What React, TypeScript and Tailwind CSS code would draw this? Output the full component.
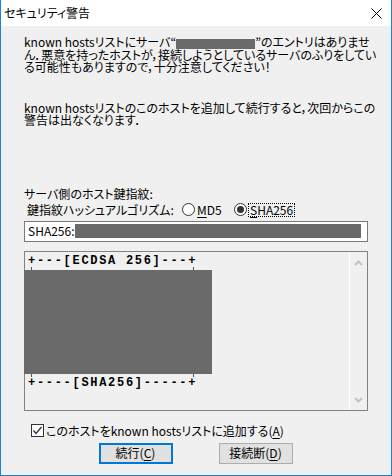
function Radio({ checked }: { checked?: boolean }) {
  return (
    <span className="flex h-[13px] w-[13px] items-center justify-center rounded-full border border-[#333333] bg-white">
      {checked && <span className="h-[7px] w-[7px] rounded-full bg-[#333333]" />}
    </span>
  );
}

function Redacted({ w, h }: { w: number; h: number }) {
  return <span className="inline-block bg-[#6a6a6a] align-middle" style={{ width: w, height: h }} />;
}

function Chevron({ down }: { down?: boolean }) {
  return (
    <svg width="9" height="6" viewBox="0 0 9 6" className={down ? "rotate-180" : ""}>
      <polyline points="1,5 4.5,1.5 8,5" fill="none" stroke="#c4c4c4" strokeWidth="2" />
    </svg>
  );
}

export default function App() {
  return (
    <div className="flex h-[476px] w-[392px] flex-col overflow-hidden border-x border-b border-[#1883d7] bg-[#f0f0f0] font-['Noto_Sans_CJK_JP',sans-serif] text-[12px] text-black [font-feature-settings:'palt']">
      {/* title bar */}
      <div className="flex h-[26px] shrink-0 items-center justify-between bg-white pl-[3px] pr-[9px]">
        <span className="leading-[14px]">セキュリティ警告</span>
        <svg width="11" height="11" viewBox="0 0 11 11">
          <path d="M0.5 0.5 L10.5 10.5 M10.5 0.5 L0.5 10.5" stroke="#000" strokeWidth="1" />
        </svg>
      </div>

      <div className="flex flex-col pl-[23px]">
        <div className="mt-[10px] leading-[12.5px] whitespace-nowrap">
          <div>
            known hostsリストにサーバ“<Redacted w={79} h={10} />”のエントリはありませ
          </div>
          <div>ん．悪意を持ったホストが，接続しようとしているサーバのふりをしてい</div>
          <div>る可能性もありますので，十分注意してください！</div>
        </div>

        <div className="mt-[28px] leading-[12.5px] whitespace-nowrap">
          <div>known hostsリストのこのホストを追加して続行すると，次回からこの</div>
          <div>警告は出なくなります．</div>
        </div>

        <div className="mt-[60px] leading-[13px]">サーバ側のホスト鍵指紋:</div>

        <div className="mt-[3px] flex h-[14px] items-center pl-[3px] leading-[14px]">
          <span className="w-[155px] whitespace-nowrap">鍵指紋ハッシュアルゴリズム:</span>
          <span className="flex w-[52px] items-center gap-[2px]">
            <Radio />
            <span>
              <span className="underline underline-offset-2">M</span>D5
            </span>
          </span>
          <span className="flex items-center gap-[1px]">
            <Radio checked />
            <span className="border border-dotted border-black px-[1px] leading-[12px]">
              <span className="underline underline-offset-2">S</span>HA256
            </span>
          </span>
        </div>

        <div className="mt-[4px] flex h-[21px] w-[344px] items-center border border-[#7a7a7a] bg-white pl-[3px]">
          <span className="leading-[14px]">SHA256:</span>
          <Redacted w={286} h={14} />
        </div>

        <div className="mt-[9px] flex h-[160px] w-[344px] border border-[#828282]">
          <div className="flex flex-1 flex-col pt-[3px] font-['Liberation_Mono',monospace] text-[12px] font-bold leading-[12px] tracking-[1.7px] whitespace-nowrap [font-feature-settings:normal]">
            <div className="pl-[3px]">+---[ECDSA 256]---+</div>
            <div className="flex h-[3px] pl-[6px]">
              <span className="h-full w-px bg-[#555]" />
              <span className="ml-[161px] h-full w-px bg-[#555]" />
            </div>
            <div className="-ml-px h-[104px] w-[188px] bg-[#6a6a6a]" />
            <div className="flex h-[3px] pl-[6px]">
              <span className="h-full w-px bg-[#555]" />
              <span className="ml-[161px] h-full w-px bg-[#555]" />
            </div>
            <div className="pl-[3px]">+----[SHA256]-----+</div>
          </div>
          <div className="flex w-[18px] flex-col items-center justify-between border-l border-white pb-[7px] pt-[8px]">
            <Chevron />
            <Chevron down />
          </div>
        </div>

        <div className="mt-[13px] flex h-[14px] items-center pl-[7px] leading-[14px]">
          <span className="flex h-[13px] w-[13px] items-center justify-center border border-[#333333] bg-white">
            <svg width="11" height="11" viewBox="0 0 11 11">
              <polyline points="1.5,5.5 4,8.5 9.5,2" fill="none" stroke="#333" strokeWidth="1.3" />
            </svg>
          </span>
          <span className="ml-[2px] whitespace-nowrap">
            このホストをknown hostsリストに追加する(<span className="underline underline-offset-2">A</span>)
          </span>
        </div>
      </div>

      <div className="mt-[5px] flex justify-center gap-[46px] pr-[1px]">
        <button className="flex h-[21px] w-[74px] items-center justify-center border-2 border-[#0078d7] bg-[#e1e1e1] leading-[14px]">
          続行(<span className="underline underline-offset-2">C</span>)
        </button>
        <button className="flex h-[21px] w-[74px] items-center justify-center border border-[#adadad] bg-[#e1e1e1] leading-[14px]">
          接続断(<span className="underline underline-offset-2">D</span>)
        </button>
      </div>
    </div>
  );
}
